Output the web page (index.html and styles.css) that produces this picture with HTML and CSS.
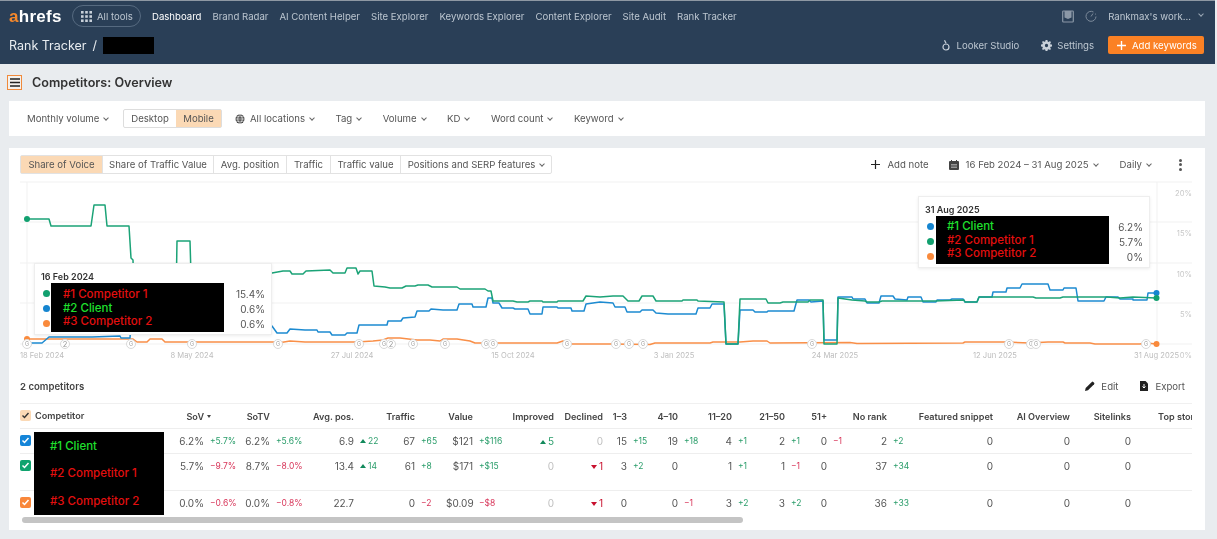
FILE: index.html
```html
<!DOCTYPE html>
<html lang="en">
<head>
<meta charset="utf-8">
<title>Rank Tracker - Competitors: Overview</title>
<link rel="stylesheet" href="styles.css">
</head>
<body>
<div class="page">
  <header class="hdr">
    <div class="hdr-row hdr-top">
      <div class="logo"><span class="logo-a">a</span>hrefs</div>
      <div class="alltools">
        <svg class="ic11" viewBox="0 0 11 11"><g fill="#c9d1da"><rect x="0" y="0" width="2.6" height="2.6"/><rect x="4.2" y="0" width="2.6" height="2.6"/><rect x="8.4" y="0" width="2.6" height="2.6"/><rect x="0" y="4.2" width="2.6" height="2.6"/><rect x="4.2" y="4.2" width="2.6" height="2.6"/><rect x="8.4" y="4.2" width="2.6" height="2.6"/><rect x="0" y="8.4" width="2.6" height="2.6"/><rect x="4.2" y="8.4" width="2.6" height="2.6"/><rect x="8.4" y="8.4" width="2.6" height="2.6"/></g></svg>
        <span>All tools</span>
      </div>
      <nav class="nav">
        <a class="nav-on">Dashboard</a><a>Brand Radar</a><a>AI Content Helper</a><a>Site Explorer</a><a>Keywords Explorer</a><a>Content Explorer</a><a>Site Audit</a><a>Rank Tracker</a>
      </nav>
      <div class="hdr-right">
        <svg class="ic12" viewBox="0 0 12 13"><path d="M1.5 1h9a.8.8 0 0 1 .8.8v9.4a.8.8 0 0 1-.8.8h-9a.8.8 0 0 1-.8-.8V1.800a.8.8 0 0 1 .8-.8z" fill="none" stroke="#8b98a7" stroke-width="1.2"/><path d="M2.500 1h7v6.500l-3.500 1.500-3.500-1.500z" fill="#8b98a7"/></svg>
        <svg class="ic12" viewBox="0 0 12 12"><path d="M8.500 1.500A5 5 0 1 0 11 6" fill="none" stroke="#7c8a9a" stroke-width="1"/><path d="M6 6l2-3" stroke="#7c8a9a" stroke-width="1"/><circle cx="10.500" cy="3.500" r=".6" fill="#7c8a9a"/></svg>
        <span class="workspace">Rankmax's work...</span><i class="chev chev-light"></i>
      </div>
    </div>
    <div class="hdr-row hdr-bottom">
      <span class="crumb">Rank Tracker</span><span class="crumb-sep">/</span><span class="crumb-black"></span>
      <div class="hdr-actions">
        <span class="act act-looker"><svg class="ic8" viewBox="0 0 8 12"><circle cx="4" cy="8" r="3" fill="none" stroke="#c9d1da" stroke-width="1.200"/><path d="M2.500 1.200l1.500 3" stroke="#c9d1da" stroke-width="1.200"/></svg>Looker Studio</span>
        <span class="act act-settings"><svg class="ic11" viewBox="0 0 12 12"><path fill="#c9d1da" fill-rule="evenodd" d="M5 0h2l.3 1.600 1.100.5L9.800 1.200l1.100 1.200-.9 1.300.4 1.100L12 5v2l-1.600.3-.4 1.100.9 1.300-1.100 1.200-1.400-.9-1.100.5L7 12H5l-.3-1.500-1.100-.5-1.400.9L1.100 9.700l.9-1.300-.4-1.100L0 7V5l1.600-.3.4-1.100-.9-1.300 1.100-1.200 1.400.9 1.100-.5zM6 4.200a1.800 1.800 0 1 0 0 3.600 1.800 1.800 0 0 0 0-3.600z"/></svg>Settings</span>
        <span class="addbtn"><svg class="ic9" viewBox="0 0 9 9"><path d="M4.500 0v9M0 4.500h9" stroke="#fff" stroke-width="1.400"/></svg>Add keywords</span>
      </div>
    </div>
  </header>

  <main class="main">
    <div class="titlerow">
      <span class="menubtn"><svg class="ic9w" viewBox="0 0 10 9"><path d="M0 1h10M0 4.500h10M0 8h10" stroke="#222" stroke-width="1.300"/></svg></span>
      <h1 class="title">Competitors: Overview</h1>
    </div>

    <section class="filters">
      <span class="flt flt-vol">Monthly volume<i class="chev"></i></span>
      <span class="seg"><span class="seg-item">Desktop</span><span class="seg-item seg-on">Mobile</span></span>
      <span class="flt flt-loc"><svg class="ic10" viewBox="0 0 10 10"><circle cx="5" cy="5" r="4.500" fill="#333"/><path d="M.5 5h9M5 .5c-3 3-3 6 0 9M5 .5c3 3 3 6 0 9M1.200 2.800h7.600M1.200 7.200h7.600" fill="none" stroke="#fff" stroke-width=".7"/></svg>All locations<i class="chev"></i></span>
      <span class="flt flt-m">Tag<i class="chev"></i></span>
      <span class="flt flt-m">Volume<i class="chev"></i></span>
      <span class="flt flt-m">KD<i class="chev"></i></span>
      <span class="flt flt-m">Word count<i class="chev"></i></span>
      <span class="flt flt-m">Keyword<i class="chev"></i></span>
    </section>

    <section class="card">
      <div class="toolbar">
        <div class="tabs">
          <span class="tab tab-on t1">Share of Voice</span><span class="tab t2">Share of Traffic Value</span><span class="tab t3">Avg. position</span><span class="tab t4">Traffic</span><span class="tab t5">Traffic value</span><span class="tab t6">Positions and SERP features<i class="chev"></i></span>
        </div>
        <div class="tools">
          <span class="tool tool-note"><svg class="ic9" viewBox="0 0 9 9"><path d="M4.500 0v9M0 4.500h9" stroke="#222" stroke-width="1.200"/></svg>Add note</span>
          <span class="tool tool-date"><svg class="ic10" viewBox="0 0 10 10"><path d="M1 1h8a1 1 0 0 1 1 1v7a1 1 0 0 1-1 1H1a1 1 0 0 1-1-1V2a1 1 0 0 1 1-1z" fill="#444"/><path d="M2.500 0v2M7.500 0v2" stroke="#444"/><path d="M2 4.500h6M2 6h6M2 7.500h6" stroke="#bbb" stroke-width=".7"/></svg>16 Feb 2024 – 31 Aug 2025<i class="chev"></i></span>
          <span class="tool tool-daily">Daily<i class="chev"></i></span>
          <span class="kebab"><b></b><b></b><b></b></span>
        </div>
      </div>

      <div class="chart">
        <svg class="chart-svg" viewBox="20 178 1172 186" width="1172" height="186">
          <g class="grid"><path d="M20 182H1192M20 222H1192M20 263H1192M20 303H1192M20 344H1192M27 182V344M1157 182V344"/></g>
          <polyline class="ln ln-o" points="27,339 133,339 137,342 147,342 150,339 162,339 165,342 273,342 278,343 290,341 305,342 357,342 373,341 383,340 388,338 400,338 417,340 430,340 440,341 443,339 457,339 470,341 475,343 557,343 563,341 570,344 610,344 650,344.500 655,343 710,343 713,342 740,342 753,341 767,341 770,343 850,342.500 857,343.500 963,343 965,342 1006,342 1030,343 1048,342 1063,342 1065,343 1090,343 1095,344 1140,344 1147,343 1156,344"/>
          <polyline class="ln ln-b" points="27,343 42,343 49,337 92,337 120,336 121,338 130,338 131,320 190,320 272,326 277,333 287,333 290,329 305,330 317,330 318,332 330,332 332,335 345,335 347,333 357,333 359,325 387,325 388,321 401,321 403,318 415,317 417,311 429,311 431,309 443,310 457,310 459,304 472,304 473,307 486,307 488,298 492,298 493,303 499,303 502,308 513,308 515,309 528,309 530,314 542,314 543,307 557,307 558,308 571,308 572,311 584,311 586,304 600,302 613,303 615,307 625,307 627,312 640,312 642,310 653,310 656,313 668,314 696,314 698,308 710,308 712,304 724,304 726,344 738,344 740,310 753,310 755,312 767,312 768,311 794,311 797,300 809,300 811,302 823,301 824,340 837,340 838,297 852,297 853,299 865,299 867,303 879,303 881,296 893,296 895,299 907,300 908,297 921,297 923,302 936,302 937,300 950,300 952,299 963,299 965,302 977,302 979,297 992,297 993,292 1006,292 1007,288 1020,288 1022,284 1048,284 1050,290 1063,290 1064,288 1076,288 1078,301 1104,301 1106,297 1118,297 1120,299 1133,299 1133,300 1147,300 1148,293 1156,293"/>
          <polyline class="ln ln-g" points="27,219 49,219 51,226 91,226 94,205 105,205 107,226 129,226 131,258 133,260 134,300 176,300 177,241 190,241 191,275 272,273 283,271 290,271 292,274 303,274 306,271 330,270 333,273 345,273 347,268 356,268 358,274 360,271 372,271 374,286 385,287 390,288 402,288 406,286 415,286 418,285 428,285 432,287 457,287 460,289 485,289 488,291 491,291 493,301 513,301 517,302 528,302 530,301 542,301 543,302 557,302 558,301 583,301 586,296 600,297 613,296 623,296 628,301 639,301 642,296 653,296 656,301 682,301 683,300 697,300 698,301 724,302 726,344 738,344 740,299 766,299 768,303 780,303 783,302 808,302 810,300 823,300 824,344 837,344 838,298 852,300 865,301 867,302 879,302 882,301 900,301 935,301 964,300 965,302 977,302 979,297 1033,297 1036,298 1060,298 1063,297 1107,297 1120,298 1133,297 1156,298"/>
          <g class="pts">
            <circle cx="27" cy="339" r="3" fill="#f98a3c"/><circle cx="27" cy="219" r="3" fill="#12a06f"/>
            <circle cx="1156.500" cy="293" r="3" fill="#1585d0"/><circle cx="1156.500" cy="298" r="3" fill="#12a06f"/><circle cx="1156.500" cy="344" r="3" fill="#f98a3c"/>
          </g>
          <g class="mk">
            <circle cx="27" cy="344" r="4.500"/><text x="27" y="346">G</text>
            <circle cx="65" cy="344" r="4.500"/><text x="65" y="346.500" class="mk-n">2</text>
            <circle cx="131" cy="344" r="4.500"/><text x="131" y="346">G</text>
            <circle cx="192" cy="344" r="4.500"/><text x="192" y="346">G</text>
            <circle cx="278" cy="344" r="4.500"/><text x="278" y="346">G</text>
            <circle cx="359" cy="344" r="4.500"/><text x="359" y="346">G</text>
            <circle cx="384" cy="344" r="4.500"/><text x="384" y="346">G</text>
            <circle cx="391" cy="344" r="4.500"/><text x="391" y="346.500" class="mk-n">2</text>
            <circle cx="413" cy="344" r="4.500"/><text x="413" y="346">G</text>
            <circle cx="445" cy="344" r="4.500"/><text x="445" y="346">G</text>
            <circle cx="486" cy="344" r="4.500"/><text x="486" y="346">G</text>
            <circle cx="493" cy="344" r="4.500"/><text x="493" y="346">G</text>
            <circle cx="567" cy="344" r="4.500"/><text x="567" y="346">G</text>
            <circle cx="616" cy="344" r="4.500"/><text x="616" y="346">G</text>
            <circle cx="629" cy="344" r="4.500"/><text x="629" y="346">G</text>
            <circle cx="643" cy="344" r="4.500"/><text x="643" y="346">G</text>
            <circle cx="812" cy="344" r="4.500"/><text x="812" y="346">G</text>
            <circle cx="1009" cy="344" r="4.500"/><text x="1009" y="346">G</text>
            <circle cx="1031" cy="344" r="4.500"/><text x="1031" y="346">G</text>
            <circle cx="1036" cy="344" r="4.500"/><text x="1036" y="346">G</text>
            <circle cx="1146" cy="344" r="4.500"/><text x="1146" y="346">G</text>
          </g>
          <g class="xl">
            <text x="42" y="358">18 Feb 2024</text><text x="192" y="358">8 May 2024</text><text x="352" y="358">27 Jul 2024</text><text x="513" y="358">15 Oct 2024</text><text x="674" y="358">3 Jan 2025</text><text x="835" y="358">24 Mar 2025</text><text x="995" y="358">12 Jun 2025</text><text x="1156.500" y="358">31 Aug 2025</text>
          </g>
          <g class="yl">
            <text x="1192" y="196">20%</text><text x="1192" y="236">15%</text><text x="1192" y="277">10%</text><text x="1192" y="317">5%</text><text x="1192" y="358">0%</text>
          </g>
        </svg>

        <div class="tt tt-left">
          <div class="tt-date">16 Feb 2024</div>
          <div class="tt-row"><i class="dot dot-g"></i><span class="tt-val">15.4%</span></div>
          <div class="tt-row"><i class="dot dot-b"></i><span class="tt-val">0.6%</span></div>
          <div class="tt-row"><i class="dot dot-o"></i><span class="tt-val">0.6%</span></div>
          <div class="tt-mask tt-mask-l">
            <span class="red">#1 Competitor 1</span><span class="grn">#2 Client</span><span class="red">#3 Competitor 2</span>
          </div>
        </div>
        <div class="tt tt-right">
          <div class="tt-date">31 Aug 2025</div>
          <div class="tt-row"><i class="dot dot-b"></i><span class="tt-val">6.2%</span></div>
          <div class="tt-row"><i class="dot dot-g"></i><span class="tt-val">5.7%</span></div>
          <div class="tt-row"><i class="dot dot-o"></i><span class="tt-val">0%</span></div>
          <div class="tt-mask tt-mask-r">
            <span class="grn">#1 Client</span><span class="red">#2 Competitor 1</span><span class="red">#3 Competitor 2</span>
          </div>
        </div>
      </div>

      <div class="summary">
        <span class="count">2 competitors</span>
        <span class="sum-actions">
          <span class="sum-act"><svg class="ic10" viewBox="0 0 10 10"><path d="M0 10l.7-3L6.800.9a1 1 0 0 1 1.400 0l.9.9a1 1 0 0 1 0 1.400L3 9.300z" fill="#222"/></svg>Edit</span>
          <span class="sum-act"><svg class="ic10" viewBox="0 0 10 10"><path d="M1 0h5.500L9 2.500V10H1z" fill="#222"/><path d="M5 3v3.500M3.500 5.500L5 7l1.500-1.500" fill="none" stroke="#fff"/></svg>Export</span>
        </span>
      </div>

      <div class="tablewrap">
        <table class="tbl">
          <colgroup>
            <col class="c156"><col class="c31"><col class="c34"><col class="c32"><col class="c37"><col class="c47"><col class="c28"><col class="c33"><col class="c28"><col class="c30"><col class="c34"><col class="c47"><col class="c49"><col class="c24"><col class="c24"><col class="c27"><col class="c25"><col class="c29"><col class="c22"><col class="c31"><col class="c21"><col class="c21"><col class="c20"><col class="c40"><col class="c26"><col class="c80"><col class="c77"><col class="c61"><col class="c76">
          </colgroup>
          <thead>
            <tr>
              <th class="th-first"><span class="cb cb-h"><svg viewBox="0 0 11 11"><path d="M2.500 5.500l2 2 4-4.500" fill="none" stroke="#333" stroke-width="1.400"/></svg></span>Competitor</th>
              <th><div class="thw thw-sort">SoV<i class="caret"></i></div></th><th></th>
              <th><div class="thw">SoTV</div></th><th></th>
              <th><div class="thw">Avg. pos.</div></th><th></th>
              <th><div class="thw">Traffic</div></th><th></th>
              <th><div class="thw">Value</div></th><th></th>
              <th><div class="thw">Improved</div></th>
              <th><div class="thw">Declined</div></th>
              <th><div class="thw">1–3</div></th><th></th>
              <th><div class="thw">4–10</div></th><th></th>
              <th><div class="thw">11–20</div></th><th></th>
              <th><div class="thw">21–50</div></th><th></th>
              <th><div class="thw">51+</div></th><th></th>
              <th><div class="thw">No rank</div></th><th></th>
              <th><div class="thw">Featured snippet</div></th>
              <th><div class="thw">AI Overview</div></th>
              <th><div class="thw">Sitelinks</div></th>
              <th><div class="thw">Top stories</div></th>
            </tr>
          </thead>
          <tbody>
            <tr class="r1">
              <td class="td-first"><span class="cb cb-b"><svg viewBox="0 0 11 11"><path d="M2.500 5.500l2 2 4-4.500" fill="none" stroke="#fff" stroke-width="1.500"/></svg></span></td>
              <td class="v">6.2%</td><td class="d up">+5.7%</td>
              <td class="v">6.2%</td><td class="d up">+5.6%</td>
              <td class="v">6.9</td><td class="d up"><i class="tri-up"></i>22</td>
              <td class="v">67</td><td class="d up">+65</td>
              <td class="v">$121</td><td class="d up">+$116</td>
              <td class="v up"><i class="tri-up"></i>5</td>
              <td class="v mute">0</td>
              <td class="v">15</td><td class="d up">+15</td>
              <td class="v">19</td><td class="d up">+18</td>
              <td class="v">4</td><td class="d up">+1</td>
              <td class="v">2</td><td class="d up">+1</td>
              <td class="v">0</td><td class="d dn">−1</td>
              <td class="v">2</td><td class="d up">+2</td>
              <td class="v">0</td><td class="v">0</td><td class="v">0</td><td class="v"></td>
            </tr>
            <tr class="r2">
              <td class="td-first"><span class="cb cb-g"><svg viewBox="0 0 11 11"><path d="M2.500 5.500l2 2 4-4.500" fill="none" stroke="#fff" stroke-width="1.500"/></svg></span></td>
              <td class="v">5.7%</td><td class="d dn">−9.7%</td>
              <td class="v">8.7%</td><td class="d dn">−8.0%</td>
              <td class="v">13.4</td><td class="d up"><i class="tri-up"></i>14</td>
              <td class="v">61</td><td class="d up">+8</td>
              <td class="v">$171</td><td class="d up">+$15</td>
              <td class="v mute">0</td>
              <td class="v dk"><i class="tri-dn"></i>1</td>
              <td class="v">3</td><td class="d up">+2</td>
              <td class="v">0</td><td class="d"></td>
              <td class="v">1</td><td class="d up">+1</td>
              <td class="v">1</td><td class="d dn">−1</td>
              <td class="v">0</td><td class="d"></td>
              <td class="v">37</td><td class="d up">+34</td>
              <td class="v">0</td><td class="v">0</td><td class="v">0</td><td class="v"></td>
            </tr>
            <tr class="r3">
              <td class="td-first"><span class="cb cb-o"><svg viewBox="0 0 11 11"><path d="M2.500 5.500l2 2 4-4.500" fill="none" stroke="#fff" stroke-width="1.500"/></svg></span></td>
              <td class="v">0.0%</td><td class="d dn">−0.6%</td>
              <td class="v">0.0%</td><td class="d dn">−0.8%</td>
              <td class="v">22.7</td><td class="d"></td>
              <td class="v">0</td><td class="d dn">−2</td>
              <td class="v">$0.09</td><td class="d dn">−$8</td>
              <td class="v mute">0</td>
              <td class="v dk"><i class="tri-dn"></i>1</td>
              <td class="v">0</td><td class="d"></td>
              <td class="v">0</td><td class="d dn">−1</td>
              <td class="v">3</td><td class="d up">+2</td>
              <td class="v">3</td><td class="d up">+2</td>
              <td class="v">0</td><td class="d"></td>
              <td class="v">36</td><td class="d up">+33</td>
              <td class="v">0</td><td class="v">0</td><td class="v">0</td><td class="v"></td>
            </tr>
          </tbody>
        </table>
        <div class="names-mask">
          <span class="grn">#1 Client</span><span class="red">#2 Competitor 1</span><span class="red">#3 Competitor 2</span>
        </div>
      </div>
      <div class="scroll"><div class="scroll-thumb"></div></div>
    </section>
  </main>
</div>
</body>
</html>
```
FILE: styles.css
```css
* { box-sizing: border-box; }
html, body { margin: 0; padding: 0; height: 100%; }
body { background: #e9ecef; overflow: hidden; font-family: Inter, "Liberation Sans", sans-serif; font-size: 9.600px; color: #444; }
.page { width: 1217px; height: 539px; overflow: hidden; filter: blur(.3px); }
svg { display: block; flex: none; }
.ic8 { width: 8px; height: 12px; }
.ic9 { width: 9px; height: 9px; }
.ic9w { width: 10px; height: 9px; }
.ic10 { width: 10px; height: 10px; }
.ic11 { width: 11px; height: 11px; }
.ic12 { width: 12px; height: 13px; }

.chev { display: inline-block; width: 4px; height: 4px; border-right: 1px solid #666; border-bottom: 1px solid #666; transform: rotate(45deg); margin-left: 6px; position: relative; top: -2px; }
.chev-light { border-color: #9aa7b5; }

/* header */
.hdr { height: 64px; background: #2a3f57; border-top: 1px solid #8e98a3; margin-right: 2px; display: flex; flex-direction: column; color: #bcc6d0; }
.hdr-row { display: flex; align-items: center; }
.hdr-top { height: 30px; padding-left: 9px; }
.logo { width: 63px; font: 700 17px/1 "Liberation Sans", sans-serif; color: #fff; letter-spacing: .3px; }
.logo-a { color: #f7892b; }
.alltools { width: 69px; height: 22px; border: 1px solid #566a80; border-radius: 11px; display: flex; align-items: center; gap: 5px; padding-left: 8px; font-size: 9.600px; }
.nav { display: flex; gap: 11px; margin-left: 11px; font-size: 9.600px; }
.nav-on { color: #fff; }
.hdr-right { margin-left: auto; display: flex; align-items: center; padding-right: 12px; }
.hdr-right svg + svg { margin-left: 11px; }
.workspace { margin-left: 11px; }
.hdr-right .chev { margin-left: 8px; }
.hdr-bottom { height: 33px; padding: 0 11px 5px 9px; }
.crumb { font-size: 12.500px; color: #e8ecf0; }
.crumb-sep { font-size: 12.500px; color: #e8ecf0; margin-left: 6px; }
.crumb-black { width: 51px; height: 17px; background: #000; margin-left: 6px; }
.hdr-actions { margin-left: auto; display: flex; align-items: center; }
.act { display: flex; align-items: center; font-size: 9.600px; }
.act-looker { gap: 6px; }
.act-settings { gap: 5px; margin-left: 22px; }
.addbtn { display: flex; align-items: center; gap: 6px; width: 96px; height: 18px; margin-left: 14px; padding-left: 9px; background: #fb8124; border-radius: 2px; color: #fff; font-size: 9.600px; }

/* main */
.main { padding: 0 12px 0 9px; }
.titlerow { height: 37px; display: flex; align-items: center; padding-bottom: 1px; }
.menubtn { width: 15px; height: 15px; margin-left: -2px; border: 1.500px solid #f08a3c; background: #f3f1ee; display: flex; align-items: center; justify-content: center; }
.title { margin: 0 0 0 10px; font-size: 12.600px; font-weight: 600; color: #333; }
.filters { height: 35px; background: #fff; display: flex; align-items: center; font-size: 9.600px; color: #555; padding-left: 18px; }
.flt { display: flex; align-items: center; white-space: nowrap; }
.flt .chev { top: -1px; margin-left: 5px; }
.flt-loc svg { margin-right: 5px; }
.flt-loc { margin-left: 13px; }
.flt-m { margin-left: 21.500px; }
.flt-vol { width: 96px; }
.seg { display: flex; height: 19px; border: 1px solid #ddd; border-radius: 2px; line-height: 17px; }
.seg-item { width: 52px; text-align: center; }
.seg-on { width: 45px; background: #fbd9b5; }

.card { margin-top: 12px; height: 382px; background: #fff; padding: 7px 13px 0 11px; }
.toolbar { height: 23px; display: flex; align-items: flex-start; justify-content: space-between; }
.tabs { display: flex; height: 19px; border: 1px solid #e2e2e2; border-radius: 2px; line-height: 17px; color: #555; font-size: 9.600px; }
.tab { text-align: center; border-left: 1px solid #e2e2e2; white-space: nowrap; }
.tab-on { background: #fbd9b5; border-left: 0; }
.t1 { width: 81px; } .t2 { width: 111px; } .t3 { width: 73px; } .t4 { width: 44px; } .t5 { width: 70px; } .t6 { width: 151px; }
.tab .chev { margin-left: 5px; }
.tools { display: flex; align-items: center; height: 19px; color: #555; font-size: 9.600px; padding-right: 10px; }
.tool { display: flex; align-items: center; gap: 7px; white-space: nowrap; }
.tool .chev { margin-left: -2px; top: -1px; }
.tool-date { margin-left: 20px; }
.tool-daily { margin-left: 22px; }
.kebab { margin-left: 28px; width: 3px; display: flex; flex-direction: column; gap: 1.500px; }
.kebab b { width: 3px; height: 3px; border-radius: 50%; background: #555; }

.chart { position: relative; height: 186px; }
.grid path { stroke: #f1f1f1; fill: none; stroke-width: 1; }
.ln { fill: none; stroke-width: 1.500; stroke-linejoin: round; }
.ln-g { stroke: #1ba377; }
.ln-b { stroke: #1d8bd1; }
.ln-o { stroke: #f98f48; }
.mk circle { fill: #fff; stroke: #d9d9d9; stroke-width: 1; }
.mk text { font-size: 5.500px; fill: #999; text-anchor: middle; }
.mk .mk-n { font-size: 7.500px; }
.xl text { font-size: 7.600px; fill: #bdbdbd; text-anchor: middle; }
.yl text { font-size: 7.600px; fill: #c8c8c8; text-anchor: end; }

.tt { position: absolute; background: #fff; border: 1px solid #eee; box-shadow: 0 1px 3px rgba(0,0,0,.08); padding: 7px 6px 0 6px; height: 72px; }
.tt-left { left: 14px; top: 85px; width: 238px; }
.tt-right { left: 898px; top: 18px; width: 232px; }
.tt-date { font-size: 9px; font-weight: 600; color: #333; height: 13px; line-height: 12px; margin-bottom: 2px; }
.tt-row { display: flex; justify-content: space-between; align-items: center; height: 15px; font-size: 10px; color: #555; padding-left: 2px; }
.dot { width: 7px; height: 7px; border-radius: 50%; }
.dot-g { background: #12a06f; } .dot-b { background: #1585d0; } .dot-o { background: #f98a3c; }
.tt-mask { position: absolute; background: #000; width: 173px; display: flex; flex-direction: column; justify-content: center; padding-left: 12px; font-size: 11.500px; font-weight: 500; line-height: 13.500px; }
.tt-mask-l { left: 16px; top: 19px; height: 49px; padding-top: 2px; }
.tt-mask-r { left: 17px; top: 19px; height: 48px; padding-left: 11px; padding-top: 1px; }
.red { color: #e30f0f; }
.grn { color: #1fe02e; }

.summary { height: 39px; display: flex; align-items: center; justify-content: space-between; padding-top: 5px; }
.count { font-size: 9.600px; font-weight: 600; color: #444; }
.sum-actions { display: flex; gap: 21px; padding-right: 7px; color: #555; font-size: 9.600px; }
.sum-act { display: flex; align-items: center; gap: 6px; }

.tablewrap { position: relative; width: 1172px; height: 112px; overflow: hidden; }
.tbl { table-layout: fixed; width: 1190px; border-collapse: collapse; font-size: 10px; color: #555; }
.tbl th { height: 25px; padding: 0 3px 0 0; font-size: 9.100px; font-weight: 600; color: #444; white-space: nowrap; border-top: 1px solid #f0f0f0; border-bottom: 1px solid #eee; }
.thw { display: flex; justify-content: flex-end; align-items: center; }
.thw-sort { margin-right: -7px; }
.tbl th.th-first { text-align: left; padding: 0; }
.tbl td { padding: 0; border-bottom: 1px solid #eee; vertical-align: top; white-space: nowrap; line-height: 24px; }
.r1 td { height: 25px; } .r2 td { height: 37px; } .r3 td { height: 25px; }
.v { text-align: right; padding-right: 3px !important; }
.d { font-size: 8.500px; padding-left: 3px !important; }
.up { color: #2a9d6a; }
.dn { color: #d8365a; }
.dk { color: #c8102e; }
.mute { color: #c0c0c0; }
.tri-up, .tri-dn { display: inline-block; width: 0; height: 0; border-left: 3px solid transparent; border-right: 3px solid transparent; margin-right: 2px; position: relative; top: -1px; }
.tri-up { border-bottom: 4px solid #128a5c; }
.tri-dn { border-top: 4px solid #c8102e; }
.caret { display: block; flex: none; width: 0; height: 0; border-left: 2.500px solid transparent; border-right: 2.500px solid transparent; border-top: 3.500px solid #444; margin-left: 3px; }
.cb { display: inline-block; width: 11px; height: 11px; border-radius: 2px; vertical-align: middle; }
.cb svg { width: 11px; height: 11px; }
.cb-h { background: #fbd9b5; margin-right: 4px; position: relative; top: -1px; }
.cb-b { background: #1585d8; } .cb-g { background: #10a36e; } .cb-o { background: #f9873a; }
.td-first { line-height: 0 !important; padding-top: 6px !important; }
.names-mask { position: absolute; left: 14px; top: 29px; width: 130px; height: 83px; background: #000; display: flex; flex-direction: column; justify-content: space-around; padding-left: 16px; font-size: 11.500px; font-weight: 500; }
.scroll { height: 6px; margin-top: 2px; width: 1172px; }
.scroll-thumb { width: 721px; height: 6px; margin-left: 2px; border-radius: 3px; background: #c4c4c4; }

.c156 { width: 156px; } .c20 { width: 20px; } .c21 { width: 21px; } .c22 { width: 22px; } .c24 { width: 24px; } .c25 { width: 25px; } .c26 { width: 26px; } .c27 { width: 27px; } .c28 { width: 28px; } .c29 { width: 29px; } .c30 { width: 30px; } .c31 { width: 31px; } .c32 { width: 32px; } .c33 { width: 33px; } .c34 { width: 34px; } .c37 { width: 37px; } .c40 { width: 40px; } .c47 { width: 47px; } .c49 { width: 49px; } .c61 { width: 61px; } .c76 { width: 76px; } .c77 { width: 77px; } .c80 { width: 80px; }
```
